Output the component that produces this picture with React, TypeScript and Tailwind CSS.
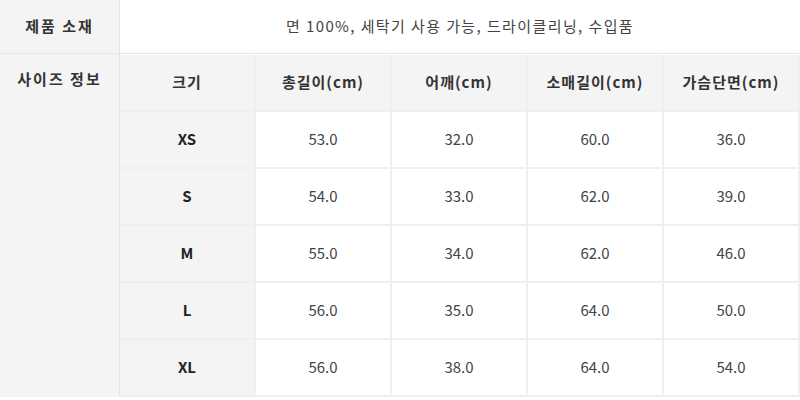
const headers = ["크기", "총길이(cm)", "어깨(cm)", "소매길이(cm)", "가슴단면(cm)"];

const rows = [
  ["XS", "53.0", "32.0", "60.0", "36.0"],
  ["S", "54.0", "33.0", "62.0", "39.0"],
  ["M", "55.0", "34.0", "62.0", "46.0"],
  ["L", "56.0", "35.0", "64.0", "50.0"],
  ["XL", "56.0", "38.0", "64.0", "54.0"],
];

export default function App() {
  return (
    <div
      className="h-[400px] w-[800px] overflow-hidden bg-white text-[15px] text-[#444]"
      style={{ fontFamily: '"Noto Sans CJK KR", "Noto Sans", sans-serif' }}
    >
      {/* 제품 소재 */}
      <div className="flex h-[54px] border-b border-[#e6e6e6]">
        <div className="flex w-[120px] items-center justify-center border-r border-[#e6e6e6] bg-[#f4f4f4] font-bold tracking-[2px] text-[#333]">
          제품 소재
        </div>
        <div className="flex flex-1 items-center justify-center tracking-[1.4px]">
          면 100%, 세탁기 사용 가능, 드라이클리닝, 수입품
        </div>
      </div>

      {/* 사이즈 정보 */}
      <div className="flex">
        <div className="w-[120px] border-r border-[#e6e6e6] bg-[#f4f4f4] pt-[15px] text-center font-bold leading-[20px] tracking-[2px] text-[#333]">
          사이즈 정보
        </div>
        <div className="grid flex-1 grid-cols-5 pt-px">
          {headers.map((h) => (
            <div
              key={h}
              className="flex h-[57px] items-center justify-center border-b-2 border-r-2 border-[#efefef] bg-[#f4f4f4] font-bold tracking-[1px] text-[#333]"
            >
              {h}
            </div>
          ))}
          {rows.map((r) =>
            r.map((v, i) => (
              <div
                key={r[0] + i}
                className={
                  i === 0
                    ? "flex h-[57px] items-center justify-center border-b-2 border-r-2 border-[#efefef] bg-[#f4f4f4] font-bold text-[#222]"
                    : "flex h-[57px] items-center justify-center border-b-2 border-r-2 border-[#efefef] bg-white"
                }
              >
                {v}
              </div>
            ))
          )}
        </div>
      </div>
    </div>
  );
}
